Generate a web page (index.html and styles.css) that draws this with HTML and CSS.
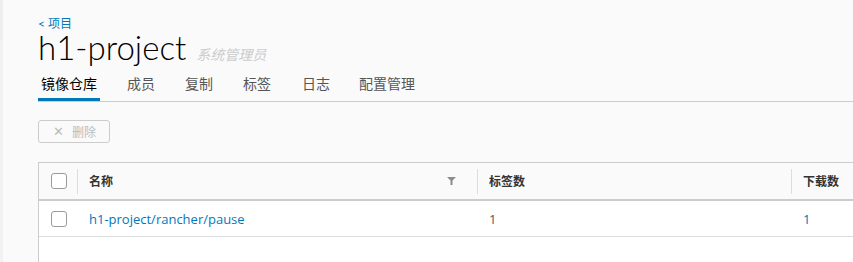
FILE: index.html
```html
<!DOCTYPE html>
<html lang="zh-CN">
<head>
    <meta charset="UTF-8">
    <title>h1-project</title>
    <link rel="stylesheet" href="styles.css">
</head>
<body>
    <div class="side-strip"></div>
    <div class="content">
        <!-- breadcrumb + title -->
        <a class="back-link" href="#">&lt; 项目</a>
        <div class="title-row">
            <h1>h1-project</h1>
            <span class="role">系统管理员</span>
        </div>

        <!-- tabs -->
        <ul class="tabs">
            <li class="active">镜像仓库</li>
            <li>成员</li>
            <li>复制</li>
            <li>标签</li>
            <li>日志</li>
            <li>配置管理</li>
        </ul>

        <div class="toolbar">
            <button class="btn-delete" disabled><span class="x">&#x2715;</span>删除</button>
        </div>

        <!-- repository grid -->
        <div class="grid">
            <div class="grid-row grid-head">
                <div class="cell cell-check"><span class="checkbox"></span></div>
                <div class="cell cell-name">
                    <span>名称</span>
                    <svg class="filter" width="9" height="8" viewBox="0 0 9 8"><path d="M0 0H9L5.5 3.5V8H3.5V3.5Z" fill="#8c8c8c"/></svg>
                </div>
                <div class="cell cell-tags">标签数</div>
                <div class="cell cell-pulls">下载数</div>
            </div>
            <div class="grid-row">
                <div class="cell cell-check"><span class="checkbox"></span></div>
                <div class="cell cell-name"><a href="#">h1-project/rancher/pause</a></div>
                <div class="cell cell-tags">1</div>
                <div class="cell cell-pulls link">1</div>
            </div>
        </div>
    </div>
</body>
</html>
```

FILE: styles.css
```css
body {
    margin: 0;
    background-color: #fafafa;
    font-family: Lato, "Noto Sans CJK SC", sans-serif;
    color: #565656;
    display: flex;
    overflow: hidden;
    height: 262px;
}

.side-strip {
    width: 3px;
    flex-shrink: 0;
    background: linear-gradient(#eeeeee 0, #eeeeee 40px, #f2f2f2 40px);
}

.content {
    flex: 1;
    padding: 17px 0 0 35px;
    min-width: 0;
    overflow: hidden;
}

.back-link {
    display: block;
    font-size: 12px;
    line-height: 14px;
    margin-bottom: 2px;
    color: #0079b8;
    text-decoration: none;
}

.title-row {
    display: flex;
    align-items: baseline;
    height: 28px;
}

h1 {
    margin: 0;
    font-size: 33px;
    font-weight: 300;
    line-height: 28px;
    color: #000;
}

.role {
    margin-left: 10px;
    font-size: 14px;
    line-height: 18px;
    font-style: italic;
    color: #cccccc;
}

/* Tabs */
.tabs {
    list-style: none;
    margin: 10px 0 0;
    padding: 0;
    display: flex;
    border-bottom: 1px solid #cccccc;
    height: 30px;
}

.tabs li {
    font-size: 14px;
    line-height: 26px;
    padding: 0 3px;
    margin-right: 24px;
    color: #565656;
    box-sizing: border-box;
    height: 30px;
    flex-shrink: 0;
}

.tabs li.active {
    color: #000;
    border-bottom: 3px solid #0079b8;
    margin-right: 24px;
}

.tabs li:nth-child(4) { margin-right: 25px; }
.tabs li:nth-child(5) { margin-right: 23px; }

/* Toolbar */
.toolbar {
    padding-top: 18px;
    height: 23px;
}

.btn-delete {
    display: flex;
    align-items: center;
    width: 72px;
    height: 23px;
    padding: 0 0 0 14px;
    border: 1px solid #cccccc;
    border-radius: 3px;
    background: #fafafa;
    color: #bbbbbb;
    font-family: Lato, "Noto Sans CJK SC", sans-serif;
    font-size: 12px;
    box-sizing: border-box;
}

.btn-delete .x {
    font-family: "DejaVu Sans", sans-serif;
    font-size: 13px;
    font-weight: 300;
    width: 9px;
    margin-right: 10px;
}

/* Grid */
.grid {
    margin-top: 19px;
    border-top: 1px solid #cccccc;
    border-left: 1px solid #cccccc;
    background-color: #fff;
    height: 99px;
}

.grid-row {
    display: flex;
    height: 35px;
    border-bottom: 1px solid #dddddd;
    font-family: "Open Sans", "Noto Sans CJK SC", sans-serif;
    font-size: 13px;
}

.grid-head {
    height: 36px;
    background-color: #fafafa;
    border-bottom: 2px solid #cccccc;
    font-weight: bold;
    font-size: 12px;
    color: #333;
}

.cell {
    display: flex;
    align-items: center;
    box-sizing: border-box;
    padding-left: 12px;
    position: relative;
    flex-shrink: 0;
}

.grid-head .cell + .cell::before {
    content: "";
    position: absolute;
    left: 0;
    top: 6px;
    bottom: 5px;
    width: 1px;
    background-color: #dddddd;
}

.cell-check {
    width: 38px;
}

.cell-name {
    width: 400px;
    justify-content: space-between;
    padding-right: 21px;
}

.cell-tags {
    width: 314px;
}

.cell-pulls {
    width: 100px;
}

.checkbox {
    display: block;
    width: 16px;
    height: 16px;
    border: 1px solid #9a9a9a;
    border-radius: 3px;
    box-sizing: border-box;
    background: #fff;
}

.grid-row a,
.cell.link {
    color: #0079b8;
    text-decoration: none;
}
```
